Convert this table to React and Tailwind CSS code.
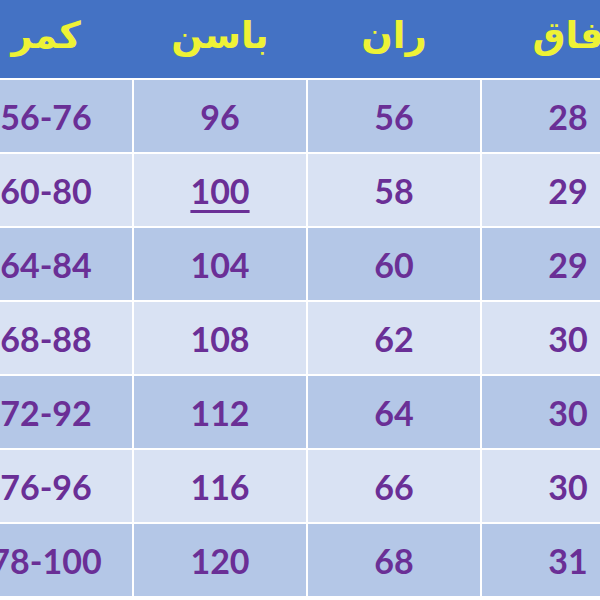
import React from "react";

const headers = ["کمر", "باسن", "ران", "فاق"];

const rows = [
  ["56-76", "96", "56", "28"],
  ["60-80", "100", "58", "29"],
  ["64-84", "104", "60", "29"],
  ["68-88", "108", "62", "30"],
  ["72-92", "112", "64", "30"],
  ["76-96", "116", "66", "30"],
  ["78-100", "120", "68", "31"],
];

export default function App() {
  return (
    <div className="w-[600px] h-[600px] overflow-hidden bg-white">
      <div className="ml-[-40px] w-[700px] flex flex-col gap-[2px]">
        {/* سرستون‌ها */}
        <div className="h-[78px] bg-[#4472c4] grid grid-cols-[172px_172px_172px_172px] gap-[2px]">
          {headers.map((h, i) => (
            <div
              key={i}
              className="flex items-center justify-center pb-[6px] text-[#eef236] text-[37px] font-bold font-['DejaVu_Sans',sans-serif]"
              dir="rtl"
            >
              {h}
            </div>
          ))}
        </div>

        {rows.map((row, r) => (
          <div
            key={r}
            className="h-[72px] grid grid-cols-[172px_172px_172px_172px] gap-[2px]"
          >
            {row.map((cell, c) => (
              <div
                key={c}
                className={`flex items-center justify-center font-['Lato',sans-serif] font-bold text-[34px] text-[#6a2f96] ${
                  r % 2 === 0 ? "bg-[#b4c7e7]" : "bg-[#d9e2f3]"
                }`}
              >
                <span
                  className={
                    r === 1 && c === 1
                      ? "underline decoration-[3px] underline-offset-[6px]"
                      : ""
                  }
                >
                  {cell}
                </span>
              </div>
            ))}
          </div>
        ))}
      </div>
    </div>
  );
}
